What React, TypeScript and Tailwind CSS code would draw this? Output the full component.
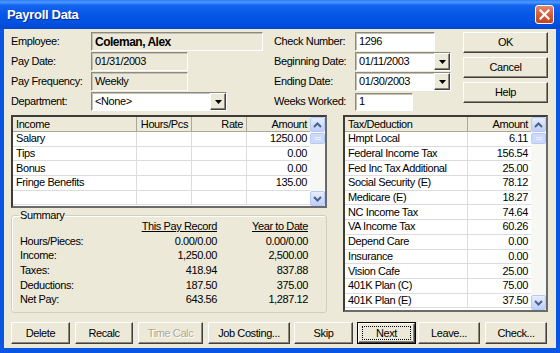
import React from "react";

const sunk =
  "border border-t-[#8d8b80] border-l-[#8d8b80] border-b-white border-r-white shadow-[inset_1px_1px_0_#c4c1b3]";
const raised =
  "border border-t-white border-l-white border-b-[#404040] border-r-[#404040] shadow-[inset_-1px_-1px_0_#8a8778]";

function Tri() {
  return (
    <svg width="7" height="4" viewBox="0 0 7 4">
      <path d="M0 0h7L3.5 4z" fill="#000" />
    </svg>
  );
}

function DropBtn() {
  return (
    <div className={`w-[16px] h-full shrink-0 flex items-center justify-center bg-[#ece9d8] ${raised}`}>
      <Tri />
    </div>
  );
}

function Chev({ up }: { up?: boolean }) {
  return (
    <svg width="9" height="6" viewBox="0 0 9 6">
      <path
        d={up ? "M1 5L4.5 1.5L8 5" : "M1 1L4.5 4.5L8 1"}
        stroke="#4d6185"
        strokeWidth="2"
        fill="none"
      />
    </svg>
  );
}

function ScrollBtn({ up }: { up?: boolean }) {
  return (
    <div className="h-[15px] w-full shrink-0 rounded-[2px] border border-[#b7c9f5] bg-[linear-gradient(to_bottom,#e6edfe,#bccffb)] flex items-center justify-center">
      <Chev up={up} />
    </div>
  );
}

function Scrollbar() {
  return (
    <div className="w-[15px] shrink-0 flex flex-col bg-[#f7f7f3]">
      <ScrollBtn up />
      <div className="mt-[1px] h-[11px] rounded-[2px] border border-[#b7c9f5] bg-[#cbd9fc] flex flex-col items-center justify-center gap-[1px]">
        <div className="w-[6px] h-px bg-[#eef3ff]" />
        <div className="w-[6px] h-px bg-[#eef3ff]" />
      </div>
      <div className="flex-1" />
      <ScrollBtn />
    </div>
  );
}

const gridBox =
  "flex bg-white border-2 border-t-[#3c3c3c] border-l-[#3c3c3c] border-r-[#6a6a6a] border-b-[#6a6a6a]";

const incomeRows: [string, string][] = [
  ["Salary", "1250.00"],
  ["Tips", "0.00"],
  ["Bonus", "0.00"],
  ["Fringe Benefits", "135.00"],
  ["", ""],
];

const taxRows: [string, string][] = [
  ["Hmpt Local", "6.11"],
  ["Federal Income Tax", "156.54"],
  ["Fed Inc Tax Additional", "25.00"],
  ["Social Security (E)", "78.12"],
  ["Medicare (E)", "18.27"],
  ["NC Income Tax", "74.64"],
  ["VA Income Tax", "60.26"],
  ["Depend Care", "0.00"],
  ["Insurance", "0.00"],
  ["Vision Cafe", "25.00"],
  ["401K Plan (C)", "75.00"],
  ["401K Plan (E)", "37.50"],
];

const summary: [string, string, string][] = [
  ["Hours/Pieces:", "0.00/0.00", "0.00/0.00"],
  ["Income:", "1,250.00", "2,500.00"],
  ["Taxes:", "418.94", "837.88"],
  ["Deductions:", "187.50", "375.00"],
  ["Net Pay:", "643.56", "1,287.12"],
];

function Btn({
  children,
  className = "",
  disabled,
}: {
  children: React.ReactNode;
  className?: string;
  disabled?: boolean;
}) {
  return (
    <div
      className={`shrink-0 flex items-center justify-center bg-[#ece9d8] ${raised} ${
        disabled ? "text-[#aca899] [text-shadow:1px_1px_0_#fff]" : ""
      } ${className}`}
    >
      {children}
    </div>
  );
}

export default function App() {
  return (
    <div className="w-[560px] h-[353px] flex flex-col bg-[#0a56e4] font-['Liberation_Sans',Arial,sans-serif] text-[11px] tracking-[-0.4px] leading-none text-black overflow-hidden">
      {/* Title bar */}
      <div className="h-[29px] shrink-0 flex items-center justify-between pl-[7px] pr-[6px] bg-[linear-gradient(to_bottom,#2e7df8_0%,#4a98ff_8%,#1466f0_18%,#0658e6_45%,#0353e2_75%,#0148d4_100%)]">
        <span className="text-white font-bold text-[13px] tracking-[-0.3px] [text-shadow:1px_1px_0_#0b2d9c]">
          Payroll Data
        </span>
        <div className="w-[19px] h-[19px] rounded-[3px] border border-white bg-[linear-gradient(to_bottom,#e9876a,#d35a34_55%,#c24520)] flex items-center justify-center">
          <svg width="11" height="11" viewBox="0 0 11 11">
            <path d="M1.5 1.5L9.5 9.5M9.5 1.5L1.5 9.5" stroke="#fff" strokeWidth="2.2" strokeLinecap="square" />
          </svg>
        </div>
      </div>

      {/* Client area */}
      <div className="flex-1 mx-[4px] mb-[5px] bg-[#ece9d8] px-[7px] pt-[3px] pb-[4px] flex flex-col">
        {/* Top section */}
        <div className="h-[80px] shrink-0 flex">
          {/* col 1 */}
          <div className="w-[252px] flex flex-col gap-[1px]">
            <div className="h-[19px] flex items-center">
              <div className="w-[80px] shrink-0">Employee:</div>
              <div className={`flex-1 h-[19px] flex items-center pl-[3px] font-bold text-[12px] tracking-[-0.5px] ${sunk}`}>
                Coleman, Alex
              </div>
            </div>
            <div className="h-[19px] flex items-center">
              <div className="w-[80px] shrink-0">Pay Date:</div>
              <div className={`w-[97px] h-[19px] flex items-center pl-[3px] ${sunk}`}>01/31/2003</div>
            </div>
            <div className="h-[19px] flex items-center">
              <div className="w-[80px] shrink-0">Pay Frequency:</div>
              <div className={`w-[97px] h-[19px] flex items-center pl-[3px] ${sunk}`}>Weekly</div>
            </div>
            <div className="h-[19px] flex items-center">
              <div className="w-[80px] shrink-0">Department:</div>
              <div className={`w-[136px] h-[19px] flex items-center bg-white ${sunk}`}>
                <span className="flex-1 pl-[3px]">&lt;None&gt;</span>
                <DropBtn />
              </div>
            </div>
          </div>

          {/* col 2 */}
          <div className="w-[177px] ml-[11px] flex flex-col gap-[1px]">
            <div className="h-[19px] flex items-center">
              <div className="w-[81px] shrink-0">Check Number:</div>
              <div className={`w-[80px] h-[19px] flex items-center pl-[3px] bg-white ${sunk}`}>1296</div>
            </div>
            <div className="h-[19px] flex items-center">
              <div className="w-[81px] shrink-0">Beginning Date:</div>
              <div className={`w-[96px] h-[19px] flex items-center bg-white ${sunk}`}>
                <span className="flex-1 pl-[3px]">01/11/2003</span>
                <DropBtn />
              </div>
            </div>
            <div className="h-[19px] flex items-center">
              <div className="w-[81px] shrink-0">Ending Date:</div>
              <div className={`w-[96px] h-[19px] flex items-center bg-white ${sunk}`}>
                <span className="flex-1 pl-[3px]">01/30/2003</span>
                <DropBtn />
              </div>
            </div>
            <div className="h-[19px] flex items-center">
              <div className="w-[81px] shrink-0">Weeks Worked:</div>
              <div className={`w-[58px] h-[18px] flex items-center pl-[3px] bg-white ${sunk}`}>1</div>
            </div>
          </div>

          {/* buttons */}
          <div className="w-[85px] ml-[12px] flex flex-col gap-[4px]">
            <Btn className="h-[21px]">OK</Btn>
            <Btn className="h-[21px]">Cancel</Btn>
            <Btn className="h-[21px]">Help</Btn>
          </div>
        </div>

        {/* Middle section */}
        <div className="h-[198px] mt-[3px] shrink-0 flex">
          <div className="w-[316px] flex flex-col">
            {/* Income grid */}
            <div className={`h-[93px] ${gridBox}`}>
              <div className="flex-1 flex flex-col">
                <div className="h-[15px] flex bg-[#ece9d8] border-b border-[#aca899]">
                  <div className="w-[124px] pl-[3px] flex items-center border-r border-[#aca899]">Income</div>
                  <div className="w-[55px] pr-[3px] flex items-center justify-end border-r border-[#aca899]">Hours/Pcs</div>
                  <div className="w-[55px] pr-[3px] flex items-center justify-end border-r border-[#aca899]">Rate</div>
                  <div className="w-[63px] pr-[3px] flex items-center justify-end">Amount</div>
                </div>
                {incomeRows.map(([n, a], i) => (
                  <div key={i} className="h-[14.7px] flex border-b border-[#dcdcdc]">
                    <div className="w-[124px] pl-[3px] flex items-center border-r border-[#dcdcdc]">{n}</div>
                    <div className="w-[55px] border-r border-[#dcdcdc]" />
                    <div className="w-[55px] border-r border-[#dcdcdc]" />
                    <div className="w-[63px] pr-[3px] flex items-center justify-end">{a}</div>
                  </div>
                ))}
              </div>
              <Scrollbar />
            </div>

            {/* Summary */}
            <fieldset className="mt-[2px] h-[103px] border border-[#d0d0bf] rounded-[3px] px-[8px] shadow-[inset_1px_1px_0_#fff]">
              <legend className="-ml-[1px] px-[1px]">Summary</legend>
              <div className="-mt-[2px] flex flex-col">
                <div className="h-[14.7px] grid grid-cols-[110px_87px_91px] items-center">
                  <div />
                  <div className="text-right underline">This Pay Record</div>
                  <div className="text-right underline">Year to Date</div>
                </div>
                {summary.map(([l, a, b]) => (
                  <div key={l} className="h-[14.7px] grid grid-cols-[110px_87px_91px] items-center">
                    <div>{l}</div>
                    <div className="text-right">{a}</div>
                    <div className="text-right">{b}</div>
                  </div>
                ))}
              </div>
            </fieldset>
          </div>

          {/* Tax grid */}
          <div className={`ml-[16px] w-[205px] h-[197px] ${gridBox}`}>
            <div className="flex-1 flex flex-col">
              <div className="h-[15px] flex bg-[#ece9d8] border-b border-[#aca899]">
                <div className="w-[123px] pl-[3px] flex items-center border-r border-[#aca899]">Tax/Deduction</div>
                <div className="w-[63px] pr-[3px] flex items-center justify-end">Amount</div>
              </div>
              {taxRows.map(([n, a], i) => (
                <div key={i} className="h-[14.7px] flex border-b border-[#dcdcdc]">
                  <div className="w-[123px] pl-[3px] flex items-center border-r border-[#dcdcdc]">{n}</div>
                  <div className="w-[63px] pr-[3px] flex items-center justify-end">{a}</div>
                </div>
              ))}
            </div>
            <Scrollbar />
          </div>
        </div>

        {/* Bottom buttons */}
        <div className="mt-[9px] h-[22px] shrink-0 flex">
          <Btn className="w-[59px]">Delete</Btn>
          <Btn className="w-[58px] ml-[5px]">Recalc</Btn>
          <Btn className="w-[65px] ml-[5px]" disabled>
            Time Calc
          </Btn>
          <Btn className="w-[82px] ml-[5px]">Job Costing...</Btn>
          <Btn className="w-[59px] ml-[4px]">Skip</Btn>
          <div className="w-[59px] ml-[4px] shrink-0 border border-black flex">
            <div className={`flex-1 flex items-center justify-center bg-[#ece9d8] ${raised}`}>
              <span className="border border-dotted border-black h-[14px] w-[49px] flex items-center justify-center">
                Next
              </span>
            </div>
          </div>
          <Btn className="w-[62px] ml-[2px]">Leave...</Btn>
          <Btn className="w-[62px] ml-[5px]">Check...</Btn>
        </div>
      </div>
    </div>
  );
}
